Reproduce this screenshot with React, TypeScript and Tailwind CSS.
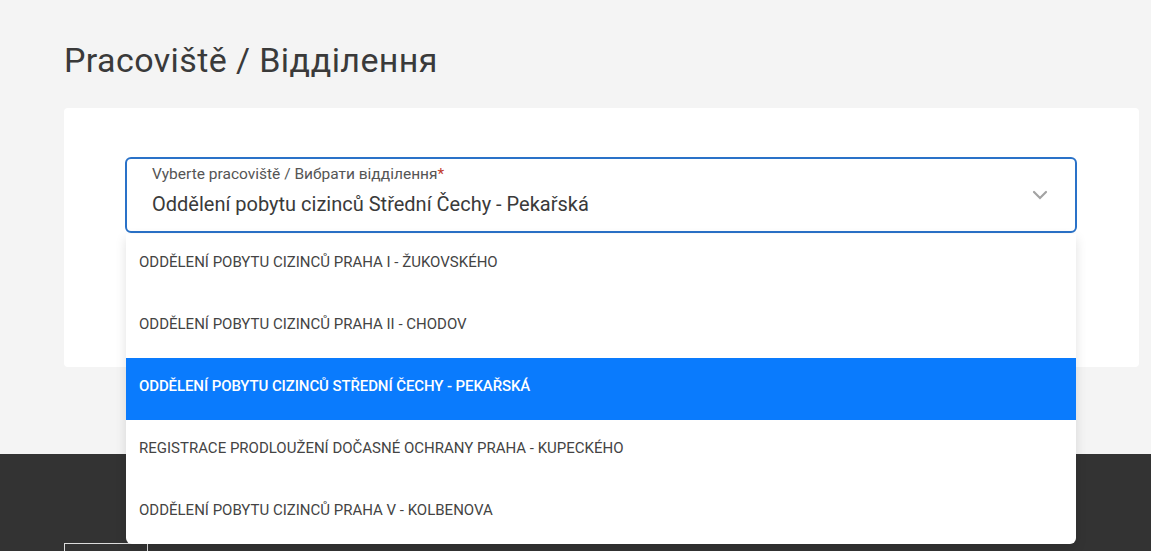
import { useState } from 'react';

const options = [
  'ODDĚLENÍ POBYTU CIZINCŮ PRAHA I - ŽUKOVSKÉHO',
  'ODDĚLENÍ POBYTU CIZINCŮ PRAHA II - CHODOV',
  'ODDĚLENÍ POBYTU CIZINCŮ STŘEDNÍ ČECHY - PEKAŘSKÁ',
  'REGISTRACE PRODLOUŽENÍ DOČASNÉ OCHRANY PRAHA - KUPECKÉHO',
  'ODDĚLENÍ POBYTU CIZINCŮ PRAHA V - KOLBENOVA',
];

const Chevron = () => (
  <svg width="16" height="10" viewBox="0 0 16 10" className="text-[#a3a3a3]">
    <path d="M2 2l6 6 6-6" fill="none" stroke="currentColor" strokeWidth="2.2" strokeLinecap="round" />
  </svg>
);

export default function App() {
  const [selected] = useState(2);

  return (
    <div className="min-h-screen bg-[#f4f4f4] font-['Roboto','Liberation_Sans',sans-serif] text-[#333]">
      <main className="pl-16 pr-3 pt-[40px] pb-[87px]">
        <h1 className="h-[41px] text-[34px] leading-[41px] font-normal tracking-[0.4px] text-[#3a3a3a]">
          Pracoviště / Відділення
        </h1>

        <section className="mt-[27px] h-[259px] rounded bg-white pl-[61px] pr-[62px] pt-[49px]">
          <div className="relative">
            <div className="flex h-[76px] items-center justify-between rounded-md border-2 border-[#2a72c8] pl-[25px] pr-[27px]">
              <div className="-mt-[9px] flex flex-col">
                <span className="text-[15.5px] leading-4 text-[#555]">
                  Vyberte pracoviště / Вибрати відділення<span className="text-[#c0392b]">*</span>
                </span>
                <span className="mt-[10px] text-[20px] leading-6 text-[#3a3a3a]">
                  Oddělení pobytu cizinců Střední Čechy - Pekařská
                </span>
              </div>
              <Chevron />
            </div>

            <ul className="absolute left-px right-px top-[calc(100%+1px)] z-10 overflow-hidden rounded-b-md bg-white shadow-[0_4px_12px_rgba(0,0,0,0.12)]">
              {options.map((opt, i) => (
                <li
                  key={opt}
                  className={
                    i === selected
                      ? 'flex h-[62px] items-center bg-[#0a7bfd] px-[13px] pb-[5px] text-[15px] font-medium tracking-[-0.1px] text-white'
                      : 'flex h-[62px] items-center px-[13px] pb-[5px] text-[15px] text-[#444]'
                  }
                >
                  {opt}
                </li>
              ))}
            </ul>
          </div>
        </section>
      </main>

      <footer className="h-[97px] overflow-hidden bg-[#333] px-16 pt-[89px]">
        <div className="h-10 w-[84px] border border-[#ddd]" />
      </footer>
    </div>
  );
}
